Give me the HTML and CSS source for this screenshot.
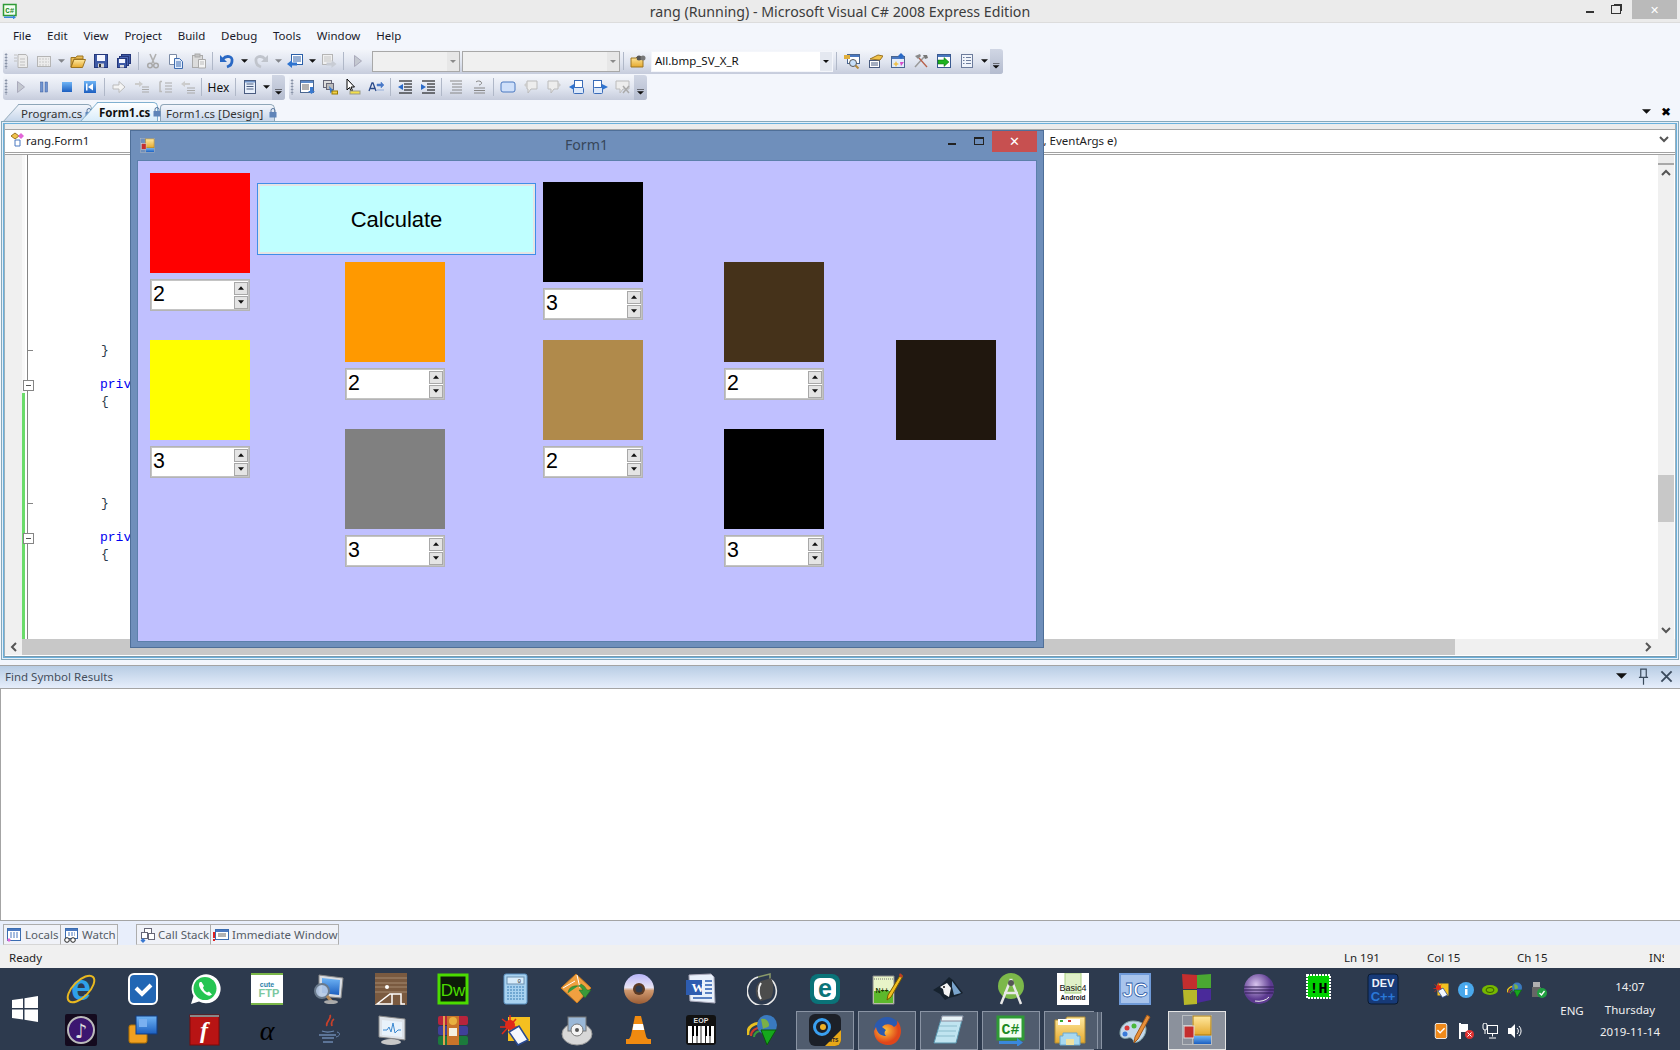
FILE: index.html
```html
<!DOCTYPE html>
<html lang="en">
<head>
<meta charset="utf-8">
<title>rang (Running) - Microsoft Visual C# 2008 Express Edition</title>
<link rel="stylesheet" href="styles.css">
</head>
<body>
<svg class="defs" xmlns="http://www.w3.org/2000/svg">
<defs>
<linearGradient id="gBlue" x1="0" y1="0" x2="0" y2="1"><stop offset="0" stop-color="#6fb4f5"/><stop offset="1" stop-color="#1c5fc0"/></linearGradient>
<linearGradient id="gFold" x1="0" y1="0" x2="0" y2="1"><stop offset="0" stop-color="#ffe9a0"/><stop offset="1" stop-color="#e5a92e"/></linearGradient>
<linearGradient id="gDisc" x1="0" y1="0" x2="0" y2="1"><stop offset="0" stop-color="#b8b4f8"/><stop offset=".45" stop-color="#e8e4f4"/><stop offset=".55" stop-color="#d09a70"/><stop offset="1" stop-color="#9a5c34"/></linearGradient>
<radialGradient id="gFox" cx=".4" cy=".4"><stop offset="0" stop-color="#ffc83a"/><stop offset="1" stop-color="#e0461a"/></radialGradient>
<radialGradient id="gEcl" cx=".4" cy=".35"><stop offset="0" stop-color="#d8c4ee"/><stop offset="1" stop-color="#5c3a90"/></radialGradient>
<symbol id="newp" viewBox="0 0 16 16"><path d="M5 1.500h8l1.500 2v11H5z" fill="#ececec" stroke="#b5b5b5"/><path d="M1 2h3M1 5h3M1 8h3M7 6h5M7 9h5M7 12h5" stroke="#c0c0c0"/></symbol>
<symbol id="addi" viewBox="0 0 16 16"><rect x="1.500" y="3.500" width="13" height="10" fill="#ececec" stroke="#b5b5b5"/><path d="M3 6h10M3 9h10M3 12h10" stroke="#c8c8c8" stroke-dasharray="2 1"/></symbol>
<symbol id="open" viewBox="0 0 16 16"><path d="M1 4.500h5l1-1.500h6v3H4L1 14z" fill="#e9bb52" stroke="#9c7420"/><path d="M4 6.500h11.500L12.500 14.500H1z" fill="url(#gFold)" stroke="#9c7420"/></symbol>
<symbol id="save" viewBox="0 0 16 16"><rect x="1.500" y="1.500" width="13" height="13" fill="#3e5aa6" stroke="#24377a"/><rect x="4" y="2" width="8" height="6" fill="#f4f6ff"/><rect x="5" y="10.500" width="6" height="4" fill="#d8d8d8"/><rect x="6" y="11" width="2" height="3" fill="#333"/></symbol>
<symbol id="savea" viewBox="0 0 16 16"><rect x="5.500" y="1.500" width="9" height="9" fill="#3e5aa6" stroke="#24377a"/><rect x="3.500" y="3.500" width="9" height="9" fill="#4c68b6" stroke="#24377a"/><rect x="1.500" y="5.500" width="9" height="9" fill="#3e5aa6" stroke="#24377a"/><rect x="3" y="6" width="6" height="4" fill="#f4f6ff"/><rect x="4" y="12" width="4" height="2.500" fill="#ddd"/></symbol>
<symbol id="cut" viewBox="0 0 16 16"><path d="M5 1l4 9M11 1L7 10" stroke="#b0b0b0" stroke-width="1.600" fill="none"/><circle cx="5" cy="12.500" r="2.300" fill="none" stroke="#a8a8a8" stroke-width="1.500"/><circle cx="11" cy="12.500" r="2.300" fill="none" stroke="#a8a8a8" stroke-width="1.500"/></symbol>
<symbol id="copy" viewBox="0 0 16 16"><path d="M1.500 1.500h7v10h-7z" fill="#fff" stroke="#7a8aa5"/><path d="M6.500 5.500h5l3 3v7h-8z" fill="#e4eefc" stroke="#3e6cb0"/><path d="M8 9h5M8 11h5M8 13h5" stroke="#3e6cb0"/></symbol>
<symbol id="paste" viewBox="0 0 16 16"><rect x="1.500" y="2.500" width="10" height="12" fill="#dcdcdc" stroke="#aaa"/><rect x="4" y="1" width="5" height="3" fill="#c4c4c4" stroke="#aaa"/><path d="M7.500 6.500h7v8.500h-7z" fill="#f4f4f4" stroke="#aaa"/><path d="M9 9h4M9 11h4" stroke="#bbb"/></symbol>
<symbol id="undo" viewBox="0 0 16 16"><path d="M4 6c3-4 10-3 9 2 0 3-2 5-5 6" fill="none" stroke="#2968c4" stroke-width="2.800"/><path d="M1 2v7h7z" fill="#2968c4"/></symbol>
<symbol id="redo" viewBox="0 0 16 16"><path d="M12 6C9 2 2 3 3 8c0 3 2 5 5 6" fill="none" stroke="#c0c4cc" stroke-width="2.800"/><path d="M15 2v7H8z" fill="#c0c4cc"/></symbol>
<symbol id="navb" viewBox="0 0 16 16"><rect x="4.500" y="1.500" width="11" height="10" fill="#fff" stroke="#2a5fa8"/><path d="M6 4h8M6 6h8M6 8h8" stroke="#2a5fa8"/><path d="M0 11l5-4v2.500h5v3H5V15z" fill="#2f74d0"/></symbol>
<symbol id="navf" viewBox="0 0 16 16"><rect x="1.500" y="1.500" width="10" height="10" fill="#f0f0f0" stroke="#b5b5b5"/><path d="M3 4h7M3 6h7M3 8h7" stroke="#c5c5c5"/><path d="M15.500 11l-5-4v2.500h-5v3h5V15z" fill="#c8ccd4"/></symbol>
<symbol id="play" viewBox="0 0 16 16"><path d="M4.500 2.500v11l7-5.500z" fill="#c4c8d0" stroke="#aab"/></symbol>
<symbol id="pause" viewBox="0 0 16 16"><rect x="4.500" y="3" width="2.500" height="10" fill="#6f93d0" stroke="#3a5ca0" stroke-width=".5"/><rect x="9" y="3" width="2.500" height="10" fill="#6f93d0" stroke="#3a5ca0" stroke-width=".5"/></symbol>
<symbol id="stop" viewBox="0 0 16 16"><rect x="3" y="3" width="10" height="10" fill="url(#gBlue)"/></symbol>
<symbol id="rest" viewBox="0 0 16 16"><rect x="2" y="2" width="12" height="12" fill="url(#gBlue)"/><path d="M11 4.500v7L6 8z" fill="#fff"/><rect x="4" y="4.500" width="1.500" height="7" fill="#fff"/></symbol>
<symbol id="step" viewBox="0 0 16 16"><path d="M2 6h6V2.500L14 8l-6 5.500V10H2z" fill="#f4f4f4" stroke="#bbb"/></symbol>
<symbol id="stpi" viewBox="0 0 16 16"><path d="M1 4h4V2l4 3-4 3V6H1z" fill="#ccc"/><path d="M8 8h7M8 10.500h7M8 13h7" stroke="#aaa"/></symbol>
<symbol id="stpo" viewBox="0 0 16 16"><path d="M3 2.500h2M3 2.500v10h2" stroke="#bbb" fill="none" stroke-width="1.500"/><path d="M8 4h7M8 7h7M8 10h7M8 13h7" stroke="#aaa"/></symbol>
<symbol id="stpu" viewBox="0 0 16 16"><path d="M1 5l4-3v2h5v2H5v2z" fill="#ccc"/><path d="M7 9h8M7 11.500h8M7 14h8" stroke="#aaa"/></symbol>
<symbol id="wind" viewBox="0 0 16 16"><rect x="2.500" y="1.500" width="11" height="13" fill="#e8f0fb" stroke="#4a5c80"/><path d="M4.500 5h7M4.500 7.500h7M4.500 10h7" stroke="#4a5c80"/><rect x="3" y="2" width="10" height="1.500" fill="#6f93c8"/></symbol>
<symbol id="cv1" viewBox="0 0 16 16"><rect x="1.500" y="1.500" width="13" height="12" fill="#fff" stroke="#4a6690"/><rect x="2" y="2" width="12" height="2" fill="#5c8ac8"/><path d="M3 6h7M3 8h7M3 10h7" stroke="#666"/><path d="M11 8h3v4h2l-3.500 3L9 12h2z" fill="#3a7ad0"/></symbol>
<symbol id="cv2" viewBox="0 0 16 16"><rect x="1.500" y="1.500" width="8" height="7" fill="#ddd" stroke="#667"/><rect x="4.500" y="4.500" width="7" height="6" fill="#bbb" stroke="#667"/><path d="M7 7l5 5-2 .5-1.500 2z" fill="#3a7ad0"/><rect x="10" y="12" width="5.500" height="3" fill="#f2d24a" stroke="#997a00"/></symbol>
<symbol id="cur" viewBox="0 0 16 16"><path d="M2 0v11l2.500-2.500 1.500 3.500 1.500-.5L6 8h3.500z" fill="#fff" stroke="#000"/><rect x="5" y="12" width="10" height="3" fill="#f4e04a" stroke="#998"/></symbol>
<symbol id="abc" viewBox="0 0 16 16"><path d="M1 12l3-8h1l3 8M2.500 9.500h4.500" stroke="#2a4a8a" stroke-width="1.300" fill="none"/><path d="M9 5h4V3l3 3-3 3V7H9zM9 11h7" fill="#4a7ac8" stroke="#4a7ac8" stroke-width=".500"/></symbol>
<symbol id="ind1" viewBox="0 0 16 16"><path d="M2 2h13M7 5h8M7 8h8M7 11h8M2 14h13" stroke="#000" stroke-width="1.200"/><path d="M1 8l5-3v6z" fill="#2a6ac8"/></symbol>
<symbol id="ind2" viewBox="0 0 16 16"><path d="M2 2h13M7 5h8M7 8h8M7 11h8M2 14h13" stroke="#000" stroke-width="1.200"/><path d="M6 8L1 5v6z" fill="#2a6ac8"/></symbol>
<symbol id="lin1" viewBox="0 0 16 16"><path d="M2 2h12M4 5h10M4 8h10M4 11h10M2 14h12" stroke="#888"/></symbol>
<symbol id="lin2" viewBox="0 0 16 16"><path d="M3 9h11M3 11.500h11M3 14h11" stroke="#888"/><path d="M5 3a3 2 0 1 1 3 3" fill="none" stroke="#888"/></symbol>
<symbol id="bub" viewBox="0 0 16 16"><rect x="1" y="3" width="14" height="10" rx="2" fill="#cfe0fa" stroke="#4a78c0"/></symbol>
<symbol id="bubl" viewBox="0 0 16 16"><path d="M4 2h10v8H8l-3 4v-4H4z" fill="#ededed" stroke="#bbb"/><path d="M1 6l3-3v6z" fill="#ccc"/></symbol>
<symbol id="bubr" viewBox="0 0 16 16"><path d="M2 2h10v8H8l-3 4v-4H2z" fill="#ededed" stroke="#bbb"/><path d="M15 6l-3-3v6z" fill="#ccc"/></symbol>
<symbol id="fnd1" viewBox="0 0 16 16"><rect x="5.500" y="1.500" width="8" height="8" fill="#fff" stroke="#3a6cb8"/><rect x="4.500" y="8.500" width="10" height="6" rx="1" fill="#dbe8fa" stroke="#3a6cb8"/><path d="M5 5v6L0 8z" fill="#2f74d0"/></symbol>
<symbol id="fnd2" viewBox="0 0 16 16"><rect x="1.500" y="1.500" width="8" height="8" fill="#fff" stroke="#3a6cb8"/><rect x="1.500" y="8.500" width="9" height="6" rx="1" fill="#dbe8fa" stroke="#3a6cb8"/><path d="M10 5v6l6-3z" fill="#2f74d0"/></symbol>
<symbol id="fndx" viewBox="0 0 16 16"><path d="M1 2h13v8H8l-3 4v-4H1z" fill="#ededed" stroke="#bbb"/><path d="M8 7l6 7M14 7l-6 7" stroke="#aaa" stroke-width="1.500"/></symbol>
<symbol id="ffld" viewBox="0 0 16 16"><path d="M1 5h5l1-1h6v10H1z" fill="url(#gFold)" stroke="#9c7420"/><circle cx="9" cy="5" r="2.500" fill="#555"/><circle cx="13" cy="5" r="2.500" fill="#777"/></symbol>
<symbol id="fwin" viewBox="0 0 16 16"><rect x="3.500" y="1.500" width="12" height="9" fill="#fff" stroke="#4a6690"/><rect x="4" y="2" width="11" height="2" fill="#4a78c0"/><rect x="0" y="2" width="6" height="4" fill="#dfae3c"/><circle cx="9" cy="10" r="3.500" fill="#c8e0fa" stroke="#555"/><path d="M11.500 12.500l3 3" stroke="#b58a3a" stroke-width="2"/></symbol>
<symbol id="fhnd" viewBox="0 0 16 16"><rect x="2.500" y="7.500" width="10" height="7" fill="#fff" stroke="#4a5c80"/><path d="M4 10h7M4 12h7" stroke="#4a5c80"/><path d="M3 6l8-4 5 1-3 4z" fill="#f0c24a" stroke="#9c7420"/></symbol>
<symbol id="fprp" viewBox="0 0 16 16"><rect x="1.500" y="3.500" width="13" height="11" fill="#e2ecfa" stroke="#4a6690"/><rect x="2" y="4" width="12" height="2" fill="#4a78c0"/><path d="M6 8l1 2 2 1-2 1-1 2-1-2-2-1 2-1z" fill="#f0c24a"/><path d="M10 9l4 0-3 4z" fill="#d64bc8"/><path d="M11 0l3 3-3 3-3-3z" fill="#2a6ac8"/></symbol>
<symbol id="tool" viewBox="0 0 16 16"><path d="M2 14L11 4" stroke="#9a9a9a" stroke-width="1.500"/><path d="M14 14L6 5" stroke="#b8604a" stroke-width="1.300"/><path d="M2 3l5-2 1 2-3 3z" fill="#8a8a8a"/><path d="M10 2h4l1 3-3 1z" fill="#777"/></symbol>
<symbol id="goin" viewBox="0 0 16 16"><rect x="1.500" y="1.500" width="13" height="13" fill="#fff" stroke="#3a5a90"/><rect x="2" y="2" width="12" height="2" fill="#4a78c0"/><path d="M2 7h6V4.500L13 9l-5 4.500V11H2z" fill="#1fb21f" stroke="#0a6a0a" stroke-width=".500"/></symbol>
<symbol id="list" viewBox="0 0 16 16"><rect x="2.500" y="1.500" width="11" height="13" fill="#f0f4fb" stroke="#6c7c9c"/><path d="M7 4.500h5M7 7.500h5M7 10.500h5" stroke="#6c7c9c"/><path d="M4 4.500h1.500M4 7.500h1.500M4 10.500h1.500" stroke="#6c7c9c"/></symbol>
<symbol id="lock" viewBox="0 0 8 10"><path d="M2 4V2.500a2 2 0 0 1 4 0V4" fill="none" stroke="#58759c"/><rect x="0.500" y="4" width="7" height="5.500" fill="#5f84b8"/></symbol>
<symbol id="down" viewBox="0 0 8 4"><path d="M0 0h8L4 4z" fill="#111"/></symbol>
<symbol id="chvd" viewBox="0 0 10 8"><path d="M1 1l4 4 4-4" fill="none" stroke="#555" stroke-width="2"/></symbol>
<symbol id="chvu" viewBox="0 0 10 8"><path d="M1 6l4-4 4 4" fill="none" stroke="#555" stroke-width="2"/></symbol>
<symbol id="chvl" viewBox="0 0 8 10"><path d="M6 1L2 5l4 4" fill="none" stroke="#555" stroke-width="2"/></symbol>
<symbol id="chvr" viewBox="0 0 8 10"><path d="M2 1l4 4-4 4" fill="none" stroke="#555" stroke-width="2"/></symbol>
<symbol id="sup" viewBox="0 0 7 4"><path d="M0 4l3.500-4L7 4z" fill="#111"/></symbol>
<symbol id="sdn" viewBox="0 0 7 4"><path d="M0 0l3.500 4L7 0z" fill="#111"/></symbol>
<symbol id="cls" viewBox="0 0 16 16"><path d="M7 2l4 3-4 3-4-3z" fill="#f0c24a" stroke="#9c7420" transform="translate(-1 -1)"/><path d="M12 1l3 3-3 3-3-3z" fill="#e266d8"/><path d="M6 8h5v6H6z" fill="#fff" stroke="#4a78c0"/></symbol>
<symbol id="form" viewBox="0 0 32 32"><rect x="1.500" y="1.500" width="29" height="29" fill="none" stroke="#b8bcc0"/><path d="M11.500 1.500v29M1.500 11.500h10M11.500 21.500h19" stroke="#b8bcc0"/><rect x="12" y="2" width="18" height="19" fill="url(#gFold)" stroke="#a87a10"/><rect x="3" y="12" width="10" height="12" fill="#c42e2e" stroke="#ddd"/><rect x="13" y="22" width="17" height="8" fill="url(#gBlue)"/></symbol>
<symbol id="csh" viewBox="0 0 32 32"><rect x="3" y="3" width="25" height="22" fill="#f4fff2" stroke="#2f9a36" stroke-width="3"/><text x="15.500" y="20" class="ic-csh">C#</text><path d="M4 27h18v-3l6 4.500-6 4.500v-3H4z" fill="#3a88dc"/></symbol>
<symbol id="ie" viewBox="0 0 32 32"><text x="16" y="27" class="ic-e">e</text><ellipse cx="16" cy="16" rx="17" ry="8" fill="none" stroke="#e8b820" stroke-width="2" transform="rotate(-45 16 16)"/></symbol>
<symbol id="task" viewBox="0 0 32 32"><rect x="2" y="1" width="28" height="30" rx="5" fill="#2166b4" stroke="#fff" stroke-width="2"/><path d="M9 15l6 6 9-9" fill="none" stroke="#fff" stroke-width="4"/></symbol>
<symbol id="wapp" viewBox="0 0 32 32"><path d="M2 31l2.500-8A14.500 14.500 0 1 1 10 28.500z" fill="#fff"/><circle cx="16" cy="15.500" r="11.500" fill="#26c553"/><path d="M11 9c-2 2-1 6 3 10s7 4.500 9 2.500l-3-3-2 1c-2-1-3.500-3-4-5l1-1.500-2.500-4z" fill="#fff"/></symbol>
<symbol id="ftp" viewBox="0 0 32 32"><rect width="32" height="32" fill="#fff"/><rect width="32" height="2" fill="#7ab648"/><rect y="30" width="32" height="2" fill="#7ab648"/><text x="16" y="14" class="ic-cute">cute</text><text x="18" y="24" class="ic-ftp">FTP</text></symbol>
<symbol id="mon" viewBox="0 0 32 32"><path d="M6 2l24 3-2 20L6 23z" fill="#d8dce2" stroke="#888"/><path d="M9 5l18 2-1 15-17-2z" fill="url(#gBlue)"/><circle cx="9" cy="18" r="7" fill="#b8cce8" fill-opacity=".9" stroke="#6a7a8c" stroke-width="2"/><path d="M14 23l5 6" stroke="#b58a5a" stroke-width="3"/><ellipse cx="18" cy="29" rx="7" ry="2" fill="#aaa"/></symbol>
<symbol id="wood" viewBox="0 0 32 32"><rect width="32" height="32" fill="#7a5a40"/><path d="M0 5h32M0 10h32M0 14h32M0 19h32" stroke="#a58a70"/><circle cx="12" cy="14" r="2" fill="#fff"/><path d="M2 31l13-10h2v10zM17 31V21h9v10h4" fill="none" stroke="#fff" stroke-width="1.500"/></symbol>
<symbol id="dw" viewBox="0 0 32 32"><rect x="2" y="2" width="28" height="28" fill="#0c1c08" stroke="#4bdc00" stroke-width="3"/><text x="16" y="23" class="ic-dw">Dw</text></symbol>
<symbol id="calc" viewBox="0 0 32 32"><rect x="5" y="1" width="23" height="30" rx="2" fill="#a8d2f0" stroke="#5a90c0"/><rect x="8" y="4" width="17" height="7" fill="#d8ecfa" stroke="#6a90b0"/><text x="22" y="10" class="ic-calc">0</text><path d="M8 14h17M8 17h17M8 20h17M8 23h17M8 26h17" stroke="#5f9ac8" stroke-width="1.500" stroke-dasharray="2 1"/></symbol>
<symbol id="diam" viewBox="0 0 32 32"><path d="M15 1l15 14-14 15L0 15z" fill="#f0a040" stroke="#c87a20"/><path d="M2 15l12-7M16 2l3 13" stroke="#fff" stroke-width="1"/><path d="M7 20a8 8 0 0 1 15-3h-4l6 8 6-8h-4a12 12 0 0 0-6-6" fill="#3a9a3a" stroke="#1f6a1f" stroke-width=".500"/></symbol>
<symbol id="disc" viewBox="0 0 32 32"><circle cx="16" cy="16" r="15" fill="url(#gDisc)"/><circle cx="16" cy="16" r="6" fill="#5c3a24"/><circle cx="16" cy="16" r="3.500" fill="#2d3a4e"/></symbol>
<symbol id="word" viewBox="0 0 32 32"><path d="M4 2l22-1 3 3 1 26-25-2z" fill="#e8f0fb" stroke="#aab"/><rect x="1" y="7" width="16" height="15" fill="#2d5cb0"/><text x="13" y="19" class="ic-w">W</text><path d="M20 8h7M20 12h7M20 16h7M20 20h7M8 25h19" stroke="#2d5cb0" stroke-width="1.500"/></symbol>
<symbol id="gshp" viewBox="0 0 32 32"><path d="M23 6a14.500 14.500 0 1 1-12-2" fill="none" stroke="#e8e8e8" stroke-width="1.600"/><path d="M11 4l12-3v9" fill="none" stroke="#8a9a6a" stroke-width="1.500"/><path d="M14 8l10-3c3 6 3 14 0 20l-10 3c-7-4-7-16 0-20z" fill="#4c4c4c"/><path d="M14 10c-3 4-3 12 0 16" stroke="#f0f0f0" stroke-width="2" fill="none"/></symbol>
<symbol id="eset" viewBox="0 0 32 32"><rect x="1" y="1" width="30" height="30" rx="8" fill="#0a7378"/><rect x="5" y="5" width="22" height="22" rx="6" fill="#fff"/><text x="16" y="24" class="ic-eset">e</text></symbol>
<symbol id="npp" viewBox="0 0 32 32"><path d="M2 3h21v28H2z" fill="#e8f4c8" stroke="#888"/><path d="M3 6h19" stroke="#777" stroke-dasharray="1 1"/><rect x="3" y="18" width="19" height="12" fill="#5cb82c"/><text x="11" y="20" class="ic-npp">N++</text><path d="M30 1l2 2-12 21-4 3 1-5z" fill="#f0c020" stroke="#7a5a00"/><path d="M29 0l3 3-2 2-2-3z" fill="#b83a2a"/></symbol>
<symbol id="bird" viewBox="0 0 32 32"><path d="M0 17l8-5 8-8 4 3 10 13-6 3-8 2-4 2-5-6z" fill="#16222e"/><path d="M7 14l7-4 4 5-2 9-5-3-1-5z" fill="#f4f4f4"/><path d="M19 8l9 12-7 2-2-8z" fill="#7aa4cc"/><circle cx="11" cy="14" r="1" fill="#111"/></symbol>
<symbol id="andr" viewBox="0 0 32 32"><circle cx="16" cy="13" r="13" fill="#7cb84a"/><path d="M16 6L6 31M16 6l10 25M9 20h14" stroke="#e8e8e8" stroke-width="2.500" fill="none"/><circle cx="16" cy="10" r="3" fill="#555"/></symbol>
<symbol id="b4a" viewBox="0 0 32 32"><rect width="32" height="32" fill="#fff"/><rect x="8" y="0" width="16" height="20" fill="#dff0c8" stroke="#a8d080"/><text x="16" y="18" class="ic-b4a">Basic4</text><text x="16" y="27" class="ic-b4b">Android</text></symbol>
<symbol id="jc" viewBox="0 0 32 32"><rect width="32" height="32" fill="#6f9ad8"/><rect x="2" y="2" width="28" height="28" fill="#a8c4ec"/><text x="16" y="24" class="ic-jc">JC</text></symbol>
<symbol id="clr" viewBox="0 0 32 32"><path d="M1 1l15 1v14H2z" fill="#c42e2e"/><path d="M16 2l14-1v14H16z" fill="#4aa832"/><path d="M2 17h14v14l-13 1z" fill="#b8b82a"/><path d="M16 16h14v11l-14 3z" fill="#4a2a9a"/></symbol>
<symbol id="ecl" viewBox="0 0 32 32"><circle cx="16" cy="16" r="15" fill="url(#gEcl)"/><path d="M1 14h30M1 17h30M2 20h28" stroke="#2d1a50" stroke-width="1.200"/><path d="M26 24a12 8 0 0 1-14 4" fill="none" stroke="#eee"/></symbol>
<symbol id="hi" viewBox="0 0 32 32"><rect x="2" y="2" width="23" height="23" fill="#00d000" stroke="#fff" stroke-dasharray="2 1" stroke-width="2"/><text x="13.500" y="20" class="ic-hi">!H</text></symbol>
<symbol id="dev" viewBox="0 0 32 32"><rect x="1" y="1" width="30" height="30" rx="3" fill="#173a78" stroke="#0a1a30"/><text x="16" y="14" class="ic-dev">DEV</text><text x="16" y="28" class="ic-cpp">C++</text></symbol>
<symbol id="clef" viewBox="0 0 32 32"><rect width="32" height="32" rx="2" fill="#140a1e"/><circle cx="16" cy="16" r="13" fill="#3c1670" stroke="#bbb" stroke-width="2"/><text x="16" y="24" class="ic-clef">♪</text></symbol>
<symbol id="stak" viewBox="0 0 32 32"><rect x="2" y="11" width="18" height="18" rx="2" fill="#f0a020" stroke="#b07000"/><rect x="9" y="2" width="21" height="18" fill="url(#gBlue)" stroke="#133d80"/><rect x="12" y="5" width="8" height="8" fill="#7ab0f0"/></symbol>
<symbol id="flsh" viewBox="0 0 32 32"><rect x="1" y="1" width="29" height="30" fill="#b81414" stroke="#7a0a0a"/><rect x="1" y="1" width="29" height="2" fill="#888"/><text x="15" y="24" class="ic-f">f</text></symbol>
<symbol id="alph" viewBox="0 0 32 32"><text x="16" y="26" class="ic-a">α</text></symbol>
<symbol id="java" viewBox="0 0 32 32"><path d="M17 1c2 4-5 7-3 11M21 5c-3 2-3 4-2 7" fill="none" stroke="#c8402a" stroke-width="1.800"/><path d="M9 17c5 2 9 1 12 0M6 21h17M9 24h12M10 28h10" stroke="#6c88b0" stroke-width="1.300" fill="none"/><path d="M24 18c4 1 3 4-1 5" fill="none" stroke="#6c88b0"/></symbol>
<symbol id="chrt" viewBox="0 0 32 32"><path d="M4 2l26 3v21L4 23z" fill="#dde2e8" stroke="#888"/><path d="M7 6l20 2v15L7 21z" fill="#e8f2fb"/><path d="M8 16l4 0 2-3 2 5 2-9 2 10 3-3h3" fill="none" stroke="#3a88d0"/><ellipse cx="16" cy="28" rx="10" ry="3" fill="#c8c8c8"/></symbol>
<symbol id="rar" viewBox="0 0 32 32"><rect x="1" y="2" width="30" height="9" rx="2" fill="#b8243c"/><rect x="1" y="12" width="30" height="9" rx="2" fill="#40409a"/><rect x="1" y="22" width="30" height="9" rx="2" fill="#1c7a3c"/><rect x="10" y="2" width="12" height="29" fill="#c8742a"/><rect x="6" y="2" width="2" height="29" fill="#e0a050"/><circle cx="16" cy="7" r="4" fill="#e8b040"/><rect x="12" y="14" width="8" height="8" fill="#f4f0e0"/></symbol>
<symbol id="book" viewBox="0 0 32 32"><rect x="9" y="3" width="22" height="24" fill="#f4c020"/><circle cx="11" cy="11" r="5" fill="#e02a1a"/><path d="M3 5l16 12M11 1v18M1 13l18 0M3 20L17 5" stroke="#e02a1a" stroke-width="1.500"/><path d="M10 18l10-6 9 14-10 5z" fill="#f4f8ff" stroke="#2a4a90" stroke-width="1.500"/></symbol>
<symbol id="dsk" viewBox="0 0 32 32"><ellipse cx="16" cy="20" rx="15" ry="11" fill="#d8d8d8" stroke="#999"/><rect x="7" y="3" width="18" height="14" fill="#9ab8d8" stroke="#777"/><circle cx="16" cy="16" r="6" fill="#f4f4f4" stroke="#777"/><circle cx="16" cy="16" r="2" fill="#555"/></symbol>
<symbol id="vlc" viewBox="0 0 32 32"><path d="M12 2h6l6 24H7z" fill="#f08a10"/><path d="M10.500 10h9.500l1.200 6H9.500z" fill="#fff"/><path d="M3 25h3l2-3h14l3 3h3v5H3z" fill="#f08a10"/></symbol>
<symbol id="eop" viewBox="0 0 32 32"><rect x="1" y="1" width="30" height="30" rx="3" fill="#111"/><text x="16" y="9" class="ic-eop">EOP</text><rect x="3" y="12" width="26" height="17" fill="#fff"/><path d="M7.500 12v17M12 12v17M16 12v17M20.500 12v17M25 12v17" stroke="#333"/><path d="M7 12h2v10H7zM11 12h2v10h-2zM20 12h2v10h-2zM24 12h2v10h-2z" fill="#000"/></symbol>
<symbol id="idm" viewBox="0 0 32 32"><path d="M1 21a11 10 0 0 1 15-11" fill="none" stroke="#e8c020" stroke-width="3"/><path d="M4 22a9 8 0 0 1 11-8" fill="none" stroke="#d03a2a" stroke-width="2"/><path d="M7 23a7 6 0 0 1 8-6" fill="none" stroke="#3a9a3a" stroke-width="2"/><circle cx="20" cy="11" r="10" fill="#3a7ac0"/><path d="M14 5c4-1 7 1 8 5s-4 3-6 5" fill="#7ab048"/><path d="M14 16h15l-9 15z" fill="#15a81c" stroke="#0a5a0a"/></symbol>
<symbol id="mts" viewBox="0 0 32 32"><rect x="0" y="0" width="32" height="32" rx="6" fill="#1c2028"/><path d="M32 16v10a6 6 0 0 1-6 6H16z" fill="#e8a818"/><circle cx="13" cy="13" r="7.500" fill="none" stroke="#3aa0f0" stroke-width="3"/><circle cx="14" cy="13" r="3" fill="#f0b020"/><text x="24" y="28" class="ic-mts">MTS</text></symbol>
<symbol id="fox" viewBox="0 0 32 32"><circle cx="16" cy="16" r="13" fill="#2a5ab0"/><path d="M3 17c0 9 7 14 14 14 9 0 13-8 13-14 0-4-2-9-4-10 1 3-1 5-3 6-3-3-8-4-12 0l4 3c-2 2-2 4 0 6-4 0-9-2-10-9z" fill="url(#gFox)"/></symbol>
<symbol id="note" viewBox="0 0 32 32"><path d="M9 2h21L23 29H1z" fill="#c0e4f0" stroke="#5a98b0"/><path d="M9 2h21l-1 5H8z" fill="#e8f4f8" stroke="#889"/><path d="M6 12h18M5 17h18M4 22h18" stroke="#8abccc"/></symbol>
<symbol id="fldr" viewBox="0 0 32 32"><path d="M1 6h10l2-3h18v26H1z" fill="url(#gFold)" stroke="#b08a30"/><rect x="4" y="5" width="22" height="6" fill="#fff"/><rect x="6" y="6" width="3" height="2" fill="#3a3"/><rect x="14" y="6" width="3" height="2" fill="#c33"/><path d="M9 19h14v3h3v9H6v-9h3z" fill="#a8d8f0" stroke="#6aa8d0"/><rect x="12" y="25" width="8" height="6" fill="#f0e0a0"/></symbol>
<symbol id="palt" viewBox="0 0 32 32"><path d="M14 7C7 7 1 12 1 19c0 5 4 6 8 5 3-1 5 1 6 4 4 2 12-5 12-13 0-5-6-8-13-8z" fill="#c4d8ec" stroke="#8aa"/><circle cx="8" cy="14" r="2.500" fill="#d83a3a"/><circle cx="15" cy="12" r="2.500" fill="#4ab83a"/><circle cx="6" cy="20" r="2.500" fill="#3a7ad8"/><path d="M28 1l3 2-12 22-4 4 1-6z" fill="#e8903a" stroke="#a0581a"/></symbol>
<symbol id="tinf" viewBox="0 0 16 16"><circle cx="8" cy="8" r="8" fill="#49a8ec"/><rect x="7" y="7" width="2.500" height="6" fill="#fff"/><rect x="7" y="3.500" width="2.500" height="2.500" fill="#fff"/></symbol>
<symbol id="tnv" viewBox="0 0 16 16"><ellipse cx="8" cy="8" rx="8" ry="5" fill="#76b900"/><ellipse cx="8" cy="8" rx="4" ry="2.500" fill="none" stroke="#3a5c00"/></symbol>
<symbol id="tusb" viewBox="0 0 16 16"><rect x="2" y="0" width="7" height="5" fill="#b0b0b0"/><rect x="1" y="5" width="9" height="10" fill="#666"/><circle cx="11" cy="11" r="5" fill="#20a040"/><path d="M8.500 11l2 2 3-4" fill="none" stroke="#fff" stroke-width="1.300"/></symbol>
<symbol id="tchk" viewBox="0 0 14 18"><rect x=".500" y=".500" width="13" height="17" rx="2" fill="#f08a1a" stroke="#fff"/><path d="M3 8l3 3 5-5" fill="none" stroke="#fff" stroke-width="1.600"/></symbol>
<symbol id="tflg" viewBox="0 0 16 16"><path d="M2 0v16" stroke="#fff" stroke-width="2"/><path d="M3 1h7v6l2 2H3z" fill="#fff"/><circle cx="11.500" cy="11.500" r="4.500" fill="#e03030"/><path d="M9.500 9.500l4 4M13.500 9.500l-4 4" stroke="#fff"/></symbol>
<symbol id="tnet" viewBox="0 0 16 16"><rect x="5.500" y="2.500" width="10" height="8" fill="none" stroke="#fff"/><path d="M10.500 10.500v3M7 15h7" stroke="#fff"/><rect x="1" y="0" width="4" height="7" rx="2" fill="#2d3a4e" stroke="#fff"/><path d="M3 7v4" stroke="#fff"/></symbol>
<symbol id="tvol" viewBox="0 0 16 16"><path d="M1 5h3l4-4v14l-4-4H1z" fill="#fff"/><path d="M10 5a4 4 0 0 1 0 6M12 3a7 7 0 0 1 0 10" fill="none" stroke="#fff"/></symbol>
<symbol id="locs" viewBox="0 0 16 16"><rect x="1.500" y="1.500" width="13" height="12" fill="#fff" stroke="#3a6cb0"/><rect x="2" y="2" width="12" height="2" fill="#4a78c0"/><path d="M4 6h8M4 8h8M4 10h8" stroke="#4a78c0" stroke-dasharray="2 1"/><path d="M3 11l2 2-2 2-2-2z" fill="#e266d8"/></symbol>
<symbol id="wtch" viewBox="0 0 16 16"><rect x="2.500" y="1.500" width="12" height="10" fill="#fff" stroke="#3a6cb0"/><rect x="3" y="2" width="11" height="2" fill="#4a78c0"/><path d="M5 6h7M5 8h7" stroke="#4a78c0" stroke-dasharray="2 1"/><circle cx="4" cy="13" r="2.300" fill="#fff" stroke="#222"/><circle cx="10" cy="13" r="2.300" fill="#fff" stroke="#222"/></symbol>
<symbol id="call" viewBox="0 0 16 16"><rect x="5.500" y="1.500" width="7" height="7" fill="#fff" stroke="#667"/><rect x="9.500" y="6.500" width="6" height="6" fill="#fff" stroke="#667"/><rect x="2.500" y="5.500" width="6" height="6" fill="#fff" stroke="#667"/><path d="M4 11l2.500 2.500L4 16l-2.500-2.500z" fill="#3a78d0"/></symbol>
<symbol id="immd" viewBox="0 0 16 16"><rect x="2.500" y="2.500" width="13" height="10" fill="#fff" stroke="#3a6cb0"/><rect x="3" y="3" width="12" height="2" fill="#4a78c0"/><path d="M5 7h8M5 9h8" stroke="#666"/><rect x="0" y="5" width="2" height="6" fill="#e02020"/><rect x="0" y="12" width="2" height="2" fill="#e02020"/></symbol>
</defs>
</svg>

<div class="app">
  <header class="titlebar">
    <svg class="title-icon"><use href="#csh"/></svg>
    <span class="title-text">rang (Running) - Microsoft Visual C# 2008 Express Edition</span>
    <div class="wbtns">
      <span class="wmin"></span>
      <span class="wres"></span>
      <span class="wcls">✕</span>
    </div>
  </header>

  <nav class="menubar">
    <span class="mi">File</span><span class="mi">Edit</span><span class="mi">View</span><span class="mi">Project</span><span class="mi">Build</span><span class="mi">Debug</span><span class="mi">Tools</span><span class="mi">Window</span><span class="mi">Help</span>
  </nav>

  <div class="tbrow">
    <div class="toolbar">
      <i class="grip"></i>
      <span class="tb"><svg><use href="#newp"/></svg></span>
      <span class="tb"><svg><use href="#addi"/></svg></span><span class="ar off"><svg><use href="#down"/></svg></span>
      <span class="tb"><svg><use href="#open"/></svg></span>
      <span class="tb"><svg><use href="#save"/></svg></span>
      <span class="tb"><svg><use href="#savea"/></svg></span>
      <i class="sp"></i>
      <span class="tb"><svg><use href="#cut"/></svg></span>
      <span class="tb"><svg><use href="#copy"/></svg></span>
      <span class="tb"><svg><use href="#paste"/></svg></span>
      <i class="sp"></i>
      <span class="tb"><svg><use href="#undo"/></svg></span><span class="ar"><svg><use href="#down"/></svg></span>
      <span class="tb"><svg><use href="#redo"/></svg></span><span class="ar off"><svg><use href="#down"/></svg></span>
      <span class="tb"><svg><use href="#navb"/></svg></span><span class="ar"><svg><use href="#down"/></svg></span>
      <span class="tb"><svg><use href="#navf"/></svg></span>
      <i class="sp"></i>
      <span class="tb"><svg><use href="#play"/></svg></span>
      <div class="combo combo-a"><span class="cb-btn off"><svg><use href="#down"/></svg></span></div>
      <div class="combo combo-b"><span class="cb-btn off"><svg><use href="#down"/></svg></span></div>
      <i class="sp sp-b"></i>
      <span class="tb"><svg><use href="#ffld"/></svg></span>
      <div class="combo combo-c"><span class="cb-text">All.bmp_SV_X_R</span><span class="cb-btn"><svg><use href="#down"/></svg></span></div>
      <i class="sp sp-c"></i>
      <span class="tb"><svg><use href="#fwin"/></svg></span>
      <span class="tb"><svg><use href="#fhnd"/></svg></span>
      <span class="tb"><svg><use href="#fprp"/></svg></span>
      <span class="tb"><svg><use href="#tool"/></svg></span>
      <span class="tb"><svg><use href="#goin"/></svg></span>
      <span class="tb"><svg><use href="#list"/></svg></span><span class="ar"><svg><use href="#down"/></svg></span>
      <span class="chev"></span>
    </div>
  </div>

  <div class="tbrow">
    <div class="toolbar">
      <i class="grip"></i>
      <span class="tb"><svg><use href="#play"/></svg></span>
      <span class="tb"><svg><use href="#pause"/></svg></span>
      <span class="tb"><svg><use href="#stop"/></svg></span>
      <span class="tb"><svg><use href="#rest"/></svg></span>
      <i class="sp"></i>
      <span class="tb"><svg><use href="#step"/></svg></span>
      <span class="tb"><svg><use href="#stpi"/></svg></span>
      <span class="tb"><svg><use href="#stpo"/></svg></span>
      <span class="tb"><svg><use href="#stpu"/></svg></span>
      <i class="sp"></i>
      <span class="hex">Hex</span>
      <i class="sp"></i>
      <span class="tb"><svg><use href="#wind"/></svg></span><span class="ar"><svg><use href="#down"/></svg></span>
      <span class="chev"></span>
    </div>
    <div class="toolbar">
      <i class="grip"></i>
      <span class="tb"><svg><use href="#cv1"/></svg></span>
      <span class="tb"><svg><use href="#cv2"/></svg></span>
      <span class="tb"><svg><use href="#cur"/></svg></span>
      <span class="tb"><svg><use href="#abc"/></svg></span>
      <i class="sp"></i>
      <span class="tb"><svg><use href="#ind1"/></svg></span>
      <span class="tb"><svg><use href="#ind2"/></svg></span>
      <i class="sp"></i>
      <span class="tb"><svg><use href="#lin1"/></svg></span>
      <span class="tb"><svg><use href="#lin2"/></svg></span>
      <i class="sp"></i>
      <span class="tb"><svg><use href="#bub"/></svg></span>
      <span class="tb"><svg><use href="#bubl"/></svg></span>
      <span class="tb"><svg><use href="#bubr"/></svg></span>
      <span class="tb"><svg><use href="#fnd1"/></svg></span>
      <span class="tb"><svg><use href="#fnd2"/></svg></span>
      <span class="tb"><svg><use href="#fndx"/></svg></span>
      <span class="chev"></span>
    </div>
  </div>

  <div class="tabstrip">
    <div class="doc-tab tab-program"><span>Program.cs</span><svg class="lk"><use href="#lock"/></svg></div>
    <div class="doc-tab tab-form active"><span>Form1.cs</span><svg class="lk"><use href="#lock"/></svg></div>
    <div class="doc-tab tab-design"><span>Form1.cs [Design]</span><svg class="lk"><use href="#lock"/></svg></div>
    <div class="tab-tools">
      <svg class="tt-down"><use href="#down"/></svg>
      <span class="tt-x">✖</span>
    </div>
  </div>

  <section class="docframe">
    <div class="docframe2">
      <div class="docframe3">
        <div class="navstrip"></div>
        <div class="navbar">
          <div class="nav-left"><svg class="nav-ic"><use href="#cls"/></svg><span>rang.Form1</span></div>
          <div class="nav-right"><span>, EventArgs e)</span><svg class="nav-chv"><use href="#chvd"/></svg></div>
        </div>
        <div class="editor">
          <div class="gutter"></div>
          <div class="changes"><div class="changed"></div></div>
          <div class="outline">
            <div class="o"></div><div class="o"></div><div class="o"></div><div class="o"></div><div class="o"></div><div class="o"></div><div class="o"></div><div class="o"></div><div class="o"></div><div class="o"></div><div class="o"></div>
            <div class="o tick"></div><div class="o"></div>
            <div class="o box"></div>
            <div class="o"></div><div class="o"></div><div class="o"></div><div class="o"></div><div class="o"></div><div class="o"></div>
            <div class="o tick"></div><div class="o"></div>
            <div class="o box"></div>
          </div>
          <div class="code">
            <div class="ln"></div><div class="ln"></div><div class="ln"></div><div class="ln"></div><div class="ln"></div><div class="ln"></div><div class="ln"></div><div class="ln"></div><div class="ln"></div><div class="ln"></div><div class="ln"></div>
            <div class="ln">}</div><div class="ln"></div>
            <div class="ln kw">private</div><div class="ln">{</div>
            <div class="ln"></div><div class="ln"></div><div class="ln"></div><div class="ln"></div><div class="ln"></div>
            <div class="ln">}</div><div class="ln"></div>
            <div class="ln kw">private</div><div class="ln">{</div>
          </div>
          <div class="vscroll">
            <span class="split"></span>
            <svg class="vs-up"><use href="#chvu"/></svg>
            <span class="vs-thumb"></span>
            <svg class="vs-dn"><use href="#chvd"/></svg>
          </div>
        </div>
        <div class="hscroll">
          <svg class="hs-l"><use href="#chvl"/></svg>
          <span class="hs-thumb"></span>
          <svg class="hs-r"><use href="#chvr"/></svg>
        </div>
      </div>
    </div>
  </section>

  <section class="toolpanel">
    <div class="tp-head">
      <span class="tp-title">Find Symbol Results</span>
      <svg class="tp-down"><use href="#down"/></svg>
      <svg class="tp-pin" viewBox="0 0 12 18"><path d="M3 1h6v9H3zM1 10h10M6 10v8" fill="none" stroke="#3a4a5c" stroke-width="1.300"/></svg>
      <svg class="tp-x" viewBox="0 0 14 14"><path d="M1.500 1.500l11 11M12.500 1.500l-11 11" stroke="#3a4a5c" stroke-width="2"/></svg>
    </div>
    <div class="tp-body"></div>
  </section>

  <div class="bottomtabs">
    <div class="bt bt-locals"><svg><use href="#locs"/></svg><span>Locals</span></div>
    <div class="bt bt-watch"><svg><use href="#wtch"/></svg><span>Watch</span></div>
    <div class="bt bt-call"><svg><use href="#call"/></svg><span>Call Stack</span></div>
    <div class="bt bt-imm"><svg><use href="#immd"/></svg><span>Immediate Window</span></div>
  </div>

  <footer class="statusbar">
    <span class="st-ready">Ready</span>
    <span class="st-ln">Ln 191</span>
    <span class="st-col">Col 15</span>
    <span class="st-ch">Ch 15</span>
    <span class="st-ins">INS</span>
  </footer>

  <div class="taskbar">
    <div class="start">
      <svg class="winlogo" viewBox="0 0 26 26"><path d="M0 4l11-1.500V12H0zM12.500 2.300L26 0v12H12.500zM0 13.500h11v10L0 22zM12.500 13.500H26V26l-13.500-2.200z" fill="#fff"/></svg>
    </div>
    <div class="apps">
      <span class="ap"><svg><use href="#ie"/></svg></span>
      <span class="ap"><svg><use href="#task"/></svg></span>
      <span class="ap"><svg><use href="#wapp"/></svg></span>
      <span class="ap"><svg><use href="#ftp"/></svg></span>
      <span class="ap"><svg><use href="#mon"/></svg></span>
      <span class="ap"><svg><use href="#wood"/></svg></span>
      <span class="ap"><svg><use href="#dw"/></svg></span>
      <span class="ap"><svg><use href="#calc"/></svg></span>
      <span class="ap"><svg><use href="#diam"/></svg></span>
      <span class="ap"><svg><use href="#disc"/></svg></span>
      <span class="ap"><svg><use href="#word"/></svg></span>
      <span class="ap"><svg><use href="#gshp"/></svg></span>
      <span class="ap"><svg><use href="#eset"/></svg></span>
      <span class="ap"><svg><use href="#npp"/></svg></span>
      <span class="ap"><svg><use href="#bird"/></svg></span>
      <span class="ap"><svg><use href="#andr"/></svg></span>
      <span class="ap"><svg><use href="#b4a"/></svg></span>
      <span class="ap"><svg><use href="#jc"/></svg></span>
      <span class="ap"><svg><use href="#clr"/></svg></span>
      <span class="ap"><svg><use href="#ecl"/></svg></span>
      <span class="ap"><svg><use href="#hi"/></svg></span>
      <span class="ap"><svg><use href="#dev"/></svg></span>

      <span class="ap"><svg><use href="#clef"/></svg></span>
      <span class="ap"><svg><use href="#stak"/></svg></span>
      <span class="ap"><svg><use href="#flsh"/></svg></span>
      <span class="ap"><svg><use href="#alph"/></svg></span>
      <span class="ap"><svg><use href="#java"/></svg></span>
      <span class="ap"><svg><use href="#chrt"/></svg></span>
      <span class="ap"><svg><use href="#rar"/></svg></span>
      <span class="ap"><svg><use href="#book"/></svg></span>
      <span class="ap"><svg><use href="#dsk"/></svg></span>
      <span class="ap"><svg><use href="#vlc"/></svg></span>
      <span class="ap"><svg><use href="#eop"/></svg></span>
      <span class="ap"><svg><use href="#idm"/></svg></span>
      <span class="ap"><span class="run"><svg><use href="#mts"/></svg></span></span>
      <span class="ap"><span class="run"><svg><use href="#fox"/></svg></span></span>
      <span class="ap"><span class="run"><svg><use href="#note"/></svg></span></span>
      <span class="ap"><span class="run"><svg><use href="#csh"/></svg></span></span>
      <span class="ap"><span class="run run-multi"><svg><use href="#fldr"/></svg></span></span>
      <span class="ap"><svg><use href="#palt"/></svg></span>
      <span class="ap"><span class="run run-active"><svg><use href="#form"/></svg></span></span>
    </div>
    <div class="tray">
      <span class="ti"><svg viewBox="0 0 32 32"><use href="#book"/></svg></span>
      <span class="ti"><svg><use href="#tinf"/></svg></span>
      <span class="ti"><svg><use href="#tnv"/></svg></span>
      <span class="ti"><svg viewBox="0 0 32 32"><use href="#idm"/></svg></span>
      <span class="ti"><svg><use href="#tusb"/></svg></span>
      <span class="ti"><svg><use href="#tchk"/></svg></span>
      <span class="ti"><svg><use href="#tflg"/></svg></span>
      <span class="ti"><svg><use href="#tnet"/></svg></span>
      <span class="ti"><svg><use href="#tvol"/></svg></span>
    </div>
    <div class="lang">ENG</div>
    <div class="clock"><span>14:07</span><span>Thursday</span><span>2019-11-14</span></div>
  </div>
</div>

<div class="form-window">
  <div class="fw-title">
    <svg class="fw-icon"><use href="#form"/></svg>
    <span class="fw-text">Form1</span>
    <span class="fw-min"></span>
    <span class="fw-max"></span>
    <span class="fw-close">✕</span>
  </div>
  <div class="fw-client">
    <div class="cell c-a"><div class="sw s-red"></div><div class="spin"><span>2</span><div class="spbs"><i><svg><use href="#sup"/></svg></i><i><svg><use href="#sdn"/></svg></i></div></div></div>
    <div class="cell c-b"><div class="sw s-yellow"></div><div class="spin"><span>3</span><div class="spbs"><i><svg><use href="#sup"/></svg></i><i><svg><use href="#sdn"/></svg></i></div></div></div>
    <div class="cell c-c"><div class="sw s-orange"></div><div class="spin"><span>2</span><div class="spbs"><i><svg><use href="#sup"/></svg></i><i><svg><use href="#sdn"/></svg></i></div></div></div>
    <div class="cell c-d"><div class="sw s-gray"></div><div class="spin"><span>3</span><div class="spbs"><i><svg><use href="#sup"/></svg></i><i><svg><use href="#sdn"/></svg></i></div></div></div>
    <div class="cell c-e"><div class="sw s-black"></div><div class="spin"><span>3</span><div class="spbs"><i><svg><use href="#sup"/></svg></i><i><svg><use href="#sdn"/></svg></i></div></div></div>
    <div class="cell c-f"><div class="sw s-tan"></div><div class="spin"><span>2</span><div class="spbs"><i><svg><use href="#sup"/></svg></i><i><svg><use href="#sdn"/></svg></i></div></div></div>
    <div class="cell c-g"><div class="sw s-brown"></div><div class="spin"><span>2</span><div class="spbs"><i><svg><use href="#sup"/></svg></i><i><svg><use href="#sdn"/></svg></i></div></div></div>
    <div class="cell c-h"><div class="sw s-black"></div><div class="spin"><span>3</span><div class="spbs"><i><svg><use href="#sup"/></svg></i><i><svg><use href="#sdn"/></svg></i></div></div></div>
    <div class="cell c-i"><div class="sw s-dark"></div></div>
    <button class="calc-btn">Calculate</button>
  </div>
</div>
</body>
</html>
```

FILE: styles.css
```css
* { box-sizing: border-box; }
html, body { margin: 0; padding: 0; }
body { width: 1680px; height: 1050px; overflow: hidden; position: relative; font: 11.5px "Noto Sans", sans-serif; color: #1e1e1e; background: #f3f6fc; }
i { font-style: normal; }
.defs { display: block; width: 0; height: 0; overflow: hidden; }
.app { width: 1680px; height: 1050px; display: flex; flex-direction: column; }

.titlebar { height: 23px; flex: none; display: flex; background: #ebebeb; border-bottom: 1px solid #dcdcdc; }
.title-icon { width: 16px; height: 16px; margin: 3px 0 0 2px; flex: none; }
.title-text { flex: 1; margin: 0 -94px 0 -18px; text-align: center; font-size: 14.2px; line-height: 23px; color: #3c3c3c; white-space: nowrap; }
.wbtns { display: flex; flex: none; align-items: flex-start; position: relative; }
.wmin { width: 8px; height: 2px; background: #333; margin: 11px 0 0 0; }
.wres { width: 10px; height: 9px; border: 1.500px solid #333; margin: 5px 0 0 17px; box-shadow: 2px -2px 0 -1px #333; }
.wcls { width: 45px; height: 19px; margin: 0 3px 0 11px; background: #bababa; color: #fff; text-align: center; line-height: 19px; font-size: 11px; }

.menubar { height: 26px; flex: none; display: flex; padding: 0 0 2px 5px; align-items: center; }
.mi { padding: 0 7.900px; color: #1a1a2a; }

.tbrow { display: flex; gap: 4px; padding-left: 3px; height: 26px; flex: none; align-items: flex-start; }
.tbrow + .tbrow { height: 27px; }
.toolbar { display: flex; align-items: center; height: 24.500px; border-radius: 3px; background: linear-gradient(#f4f6fb, #dfe4ef 55%, #c6ccdc); }
.grip { width: 6.500px; height: 16px; flex: none; background: radial-gradient(circle at 3px 1.500px, #8a94a8 1px, transparent 1.200px) 0 0 / 6.500px 3px; }
.tb { width: 23px; height: 20px; flex: none; display: flex; align-items: center; justify-content: center; }
.tb svg { width: 16px; height: 16px; display: block; }
.ar { width: 11px; flex: none; display: flex; justify-content: center; }
.ar svg { width: 7px; height: 4px; display: block; }
.ar.off, .cb-btn.off { opacity: .45; }
.sp { width: 5.500px; height: 18px; flex: none; background: linear-gradient(#b0b8c8, #b0b8c8) center / 1px 100% no-repeat; }
.sp-b { width: 6.500px; }
.sp-c { width: 7.500px; }
.hex { width: 28px; flex: none; text-align: center; font-size: 12px; color: #111; }
.chev { width: 13px; height: 100%; flex: none; border-radius: 0 3px 3px 0; background: linear-gradient(#d0d6e4, #b4bccf); display: flex; align-items: flex-end; justify-content: center; }
.chev::after { content: ""; width: 7px; height: 6px; margin-bottom: 5px; background: #111; clip-path: polygon(0 0, 100% 0, 100% 17%, 0 17%, 0 45%, 100% 45%, 50% 100%, 0 45%); }
.combo { height: 21px; flex: none; display: flex; justify-content: flex-end; align-items: stretch; border: 1px solid #a8a8a8; background: #f0f0f0; }
.combo-a { width: 88px; margin-left: 3px; }
.combo-b { width: 158px; margin-left: 2px; }
.combo-c { width: 182px; margin-left: 1.500px; border-color: #f4f6fb; background: #fff; justify-content: space-between; }
.cb-text { padding-left: 3px; line-height: 17px; color: #111; }
.cb-btn { width: 12px; display: flex; align-items: center; justify-content: center; background: #e4e8f0; }
.combo-a .cb-btn, .combo-b .cb-btn { background: #ddd; }
.cb-btn svg { width: 6px; height: 3px; display: block; }

.tabstrip { height: 19px; flex: none; display: flex; align-items: flex-end; padding-left: 20px; }
.doc-tab { height: 17px; flex: none; display: flex; align-items: center; position: relative; white-space: nowrap; border: 1px solid #8ea6b8; border-bottom: none; border-radius: 0 5px 0 0; background: linear-gradient(#f3f6fc, #c6d6ea); color: #333; }
.doc-tab::before { content: ""; position: absolute; left: -10px; top: -1px; bottom: 0; width: 18px; z-index: -1; background: linear-gradient(#f3f6fc, #c6d6ea); border-left: 1px solid #8ea6b8; border-top: 1px solid #8ea6b8; transform: skewX(-42deg); }
.tab-program { width: 72px; z-index: 1; }
.tab-form { width: 61px; height: 19px; margin-left: 5px; z-index: 3; font-weight: 700; color: #111; padding-left: 1px; border-color: #7fb0d0; background: linear-gradient(#fff, #d8ecfa); }
.tab-form::before { background: linear-gradient(#fff, #d8ecfa); border-color: #7fb0d0; z-index: 0; left: -9px; }
.tab-design { width: 115px; margin-left: 2px; padding-left: 5px; z-index: 2; border-radius: 4px 5px 0 0; }
.tab-design::before { display: none; }
.doc-tab span { position: relative; z-index: 1; }
.lk { width: 8px; height: 10px; margin-left: 3px; flex: none; position: relative; z-index: 1; }
.tab-design .lk { margin-left: 6px; }
.tab-tools { margin-left: auto; align-self: center; display: flex; align-items: center; gap: 9px; padding-right: 8px; height: 19px; }
.tt-down { width: 9px; height: 5px; }
.tt-x { font-size: 12px; line-height: 12px; color: #000; width: 12px; text-align: center; }

.docframe { height: 539px; flex: none; margin: 0 1px; border: 1px solid #86a8ba; background: #e4f0fa; padding: 1px; }
.docframe2 { height: 100%; border: 1px solid #6ab0dc; }
.docframe3 { height: 100%; border: 1px solid #9ab0bc; border-top: none; border-bottom: 1px solid #7a9aae; display: flex; flex-direction: column; background: #fff; }
.navstrip { height: 6px; flex: none; background: #ececec; border-bottom: 1px solid #a6a6a6; }
.navbar { height: 25px; flex: none; display: flex; background: #fff; border-bottom: 3px double #a2a2a2; }
.nav-left { width: 835px; flex: none; display: flex; align-items: center; padding: 0 0 2px 4px; }
.nav-ic { width: 16px; height: 16px; flex: none; margin-right: 1px; }
.nav-right { flex: 1; display: flex; align-items: center; padding: 0 6px 2px 203.500px; justify-content: space-between; }
.nav-chv { width: 10px; height: 8px; }
.editor { height: 484px; flex: none; display: flex; }
.gutter { width: 17px; flex: none; background: #f0f0f0; }
.changes { width: 3px; flex: none; background: #f8f8f8; }
.changed { height: 246px; margin-top: 238px; background: #6bdc6b; }
.outline { width: 8px; flex: none; background: linear-gradient(#858585, #858585) 2px 0 / 1px 100% no-repeat #fff; }
.o { height: 17px; }
.tick { background: linear-gradient(#858585, #858585) 2px 8px / 6px 1px no-repeat; }
.box { padding-top: 1px; }
.box::after { content: ""; display: block; width: 9px; height: 9px; margin: 3px 0 0 -2.500px; border: 1px solid #858585; background: linear-gradient(#555, #555) center / 5px 1px no-repeat #fff; }
.code { flex: 1; padding-left: 67px; font: 13px/17px "Liberation Mono", monospace; color: #2a3a4a; overflow: hidden; }
.ln { height: 17px; padding-left: 1px; }
.kw { color: #0000f0; padding-left: 0; }
.vscroll { width: 16px; flex: none; margin-right: 1px; background: #f0f0f0; display: flex; flex-direction: column; align-items: center; }
.split { width: 16px; height: 10px; flex: none; background: #ebebeb; border: 1px solid #a8a8a8; border-width: 0 0 2px 0; }
.vs-up { width: 10px; height: 8px; margin-top: 4px; flex: none; }
.vs-thumb { width: 16px; height: 47px; margin-top: 298px; flex: none; background: #c8c8c8; }
.vs-dn { width: 10px; height: 8px; margin-top: auto; margin-bottom: 4px; flex: none; }
.hscroll { height: 16px; flex: none; display: flex; align-items: center; background: #f0f0f0; padding-left: 5px; }
.hs-l { width: 8px; height: 10px; flex: none; margin-right: 4px; }
.hs-thumb { width: 1433px; height: 100%; flex: none; background: #c8c8c8; }
.hs-r { width: 8px; height: 10px; flex: none; margin-left: 189px; }

.toolpanel { height: 256px; margin-top: 5px; flex: none; display: flex; flex-direction: column; }
.tp-head { height: 24px; flex: none; display: flex; align-items: center; background: linear-gradient(#b8cde4, #e6eefb); border: solid #a4a4a4; border-width: 1px 0; padding: 0 0 2px 5px; color: #444e5c; }
.tp-title { flex: 1; }
.tp-down { width: 11px; height: 6px; flex: none; }
.tp-pin { width: 11px; height: 17px; margin-left: 11px; flex: none; }
.tp-x { width: 13px; height: 13px; margin: 0 7px 0 11px; flex: none; }
.tp-body { flex: 1; background: #fff; border: solid #a4a4a4; border-width: 0 0 1px 1px; }

.bottomtabs { height: 24px; flex: none; display: flex; align-items: flex-end; padding-left: 3px; background: #e8eefb; }
.bt { height: 21px; flex: none; display: flex; align-items: center; padding-left: 2px; gap: 3px; white-space: nowrap; background: #f0f2f8; border: 1px solid #adadad; border-bottom-color: #d6d6d6; color: #555c66; }
.bt svg { width: 16px; height: 16px; flex: none; }
.bt-locals { width: 58px; }
.bt-watch { width: 58px; margin-left: -1px; }
.bt-call { width: 75px; margin-left: 18px; }
.bt-imm { width: 129px; margin-left: -1px; }

.statusbar { height: 23px; flex: none; display: flex; align-items: center; padding: 2px 16px 0 9px; background: #f0f0f0; color: #1e1e1e; }
.st-ready { flex: 1; }
.st-ln { width: 83px; flex: none; }
.st-col { width: 90px; flex: none; }
.st-ch { width: 132px; flex: none; }
.st-ins { width: 15px; flex: none; overflow: hidden; white-space: nowrap; }

.taskbar { height: 82px; flex: none; display: flex; background: #2d3a4e; color: #f0f0f0; }
.start { width: 50px; flex: none; display: flex; align-items: center; padding-left: 12px; }
.winlogo { width: 26px; height: 26px; display: block; }
.apps { width: 1364px; flex: none; display: grid; grid-template-columns: repeat(22, 62px); grid-template-rows: 42px 40px; }
.ap { display: flex; align-items: center; justify-content: center; }
.ap svg { width: 32px; height: 32px; display: block; }
.run { width: 58px; height: 39px; display: flex; align-items: center; justify-content: center; background: #505c6e; border: 1px solid #8a94a4; }
.run-multi { border-right: none; box-shadow: 4px 0 0 -1px #505c6e, 5px 0 0 -1px #8a94a4, 8px 0 0 -1px #505c6e, 9px 0 0 -1px #8a94a4; width: 50px; margin-right: 8px; }
.run-active { background: #8b919c; border-color: #e4e4e4; }
.tray { width: 137px; flex: none; padding: 0 0 0 15px; display: grid; grid-template-columns: repeat(5, 24.500px); grid-template-rows: 44px 38px; }
.ti { display: flex; align-items: center; justify-content: center; }
.ti svg { width: 16px; height: 16px; display: block; }
.lang { width: 42px; flex: none; display: flex; align-items: center; justify-content: center; padding-top: 2px; }
.clock { width: 74px; flex: none; padding-top: 8px; display: flex; flex-direction: column; align-items: center; line-height: 22.500px; }

.form-window { position: absolute; left: 130px; top: 130px; width: 914px; height: 518px; background: #6f8fbb; border: 1px solid #4f6f98; padding: 0 6px 5px; display: flex; flex-direction: column; }
.fw-title { height: 29px; flex: none; display: flex; align-items: flex-start; }
.fw-icon { width: 15px; height: 15px; flex: none; margin: 7px 0 0 3px; }
.fw-text { flex: 1; margin-left: -18px; margin-right: -88px; text-align: center; font-size: 14.200px; line-height: 28px; color: #37475c; }
.fw-min { width: 8px; height: 2px; flex: none; margin: 12px 0 0 0; background: #222; position: relative; }
.fw-max { width: 10px; height: 8px; flex: none; margin: 6px 0 0 18px; border: 1px solid #222; border-top-width: 2px; position: relative; }
.fw-close { width: 45px; height: 21px; flex: none; margin: 0 0 0 8px; background: #c75050; color: #fff; text-align: center; line-height: 21px; font-size: 13px; position: relative; }
.fw-client { flex: 1; position: relative; background: #c0c0ff; border: 1px solid #5c80ab; }
.cell { position: absolute; width: 100px; display: flex; flex-direction: column; gap: 6px; }
.c-a { left: 12px; top: 12px; }
.c-b { left: 12px; top: 179px; }
.c-c { left: 207px; top: 101px; }
.c-d { left: 207px; top: 268px; }
.c-e { left: 405px; top: 21px; }
.c-f { left: 405px; top: 179px; }
.c-g { left: 586px; top: 101px; }
.c-h { left: 586px; top: 268px; }
.c-i { left: 758px; top: 179px; }
.sw { height: 100px; flex: none; }
.s-red { background: #ff0000; }
.s-yellow { background: #ffff00; }
.s-orange { background: #ff9900; }
.s-gray { background: #808080; }
.s-black { background: #000; }
.s-tan { background: #b08a4b; }
.s-brown { background: #45321a; }
.s-dark { background: #20170e; }
.spin { height: 32px; flex: none; display: flex; align-items: center; justify-content: space-between; background: #fff; border: 1px solid #b4b4b4; font: 21.330px/28px "Liberation Sans", sans-serif; color: #000; padding: 0 1px; box-shadow: inset 0 0 0 1px #c4c4c4; }
.spin span { padding-left: 1px; margin-top: -2px; }
.spbs { display: flex; flex-direction: column; gap: 1px; width: 14px; }
.spbs i { height: 13px; display: flex; align-items: center; justify-content: center; background: #e4e4e4; border: 1px solid #a8a8a8; }
.spbs svg { width: 6px; height: 4px; display: block; }
.calc-btn { position: absolute; left: 119px; top: 22px; width: 279px; height: 72px; padding: 2px 0 0; border: 1px solid #3f8ee8; box-shadow: inset 0 0 0 2px #e4e4e4; background: #bfffff; font: 22px "Liberation Sans", sans-serif; color: #000; }

.ic-csh { font: 700 15px "Liberation Mono", monospace; fill: #1c8a24; text-anchor: middle; }
.ic-e { font: 700 36px "Liberation Sans", sans-serif; fill: #2ea0e8; text-anchor: middle; }
.ic-cute { font: 700 7px "Liberation Sans", sans-serif; fill: #2d7fa8; text-anchor: middle; }
.ic-ftp { font: 700 11px "Liberation Sans", sans-serif; fill: #7cc8a0; text-anchor: middle; }
.ic-dw { font: 400 17px "Liberation Sans", sans-serif; fill: #4bdc00; text-anchor: middle; }
.ic-calc { font: 6px "Liberation Mono", monospace; fill: #333; text-anchor: end; }
.ic-w { font: 700 13px "Liberation Serif", serif; fill: #fff; text-anchor: middle; }
.ic-eset { font: 700 25px "Liberation Sans", sans-serif; fill: #0a7378; text-anchor: middle; }
.ic-npp { font: 700 7px "Liberation Sans", sans-serif; fill: #1a3a00; text-anchor: middle; }
.ic-b4a { font: 9px "Liberation Sans", sans-serif; fill: #111; text-anchor: middle; }
.ic-b4b { font: 700 6.500px "Liberation Sans", sans-serif; fill: #111; text-anchor: middle; }
.ic-jc { font: 700 20px "Liberation Sans", sans-serif; fill: #fff; stroke: #2a5aa8; stroke-width: .8px; text-anchor: middle; }
.ic-hi { font: 700 15px "Liberation Mono", monospace; fill: #000; text-anchor: middle; }
.ic-dev { font: 700 11px "Liberation Sans", sans-serif; fill: #eef2fa; text-anchor: middle; }
.ic-cpp { font: 700 13px "Liberation Sans", sans-serif; fill: #2a78d8; text-anchor: middle; }
.ic-clef { font: 20px "DejaVu Sans", sans-serif; fill: #ddd; text-anchor: middle; }
.ic-f { font: italic 700 24px "Liberation Serif", serif; fill: #fff; text-anchor: middle; }
.ic-a { font: italic 28px "Liberation Serif", serif; fill: #000; text-anchor: middle; }
.ic-eop { font: 700 7px "Liberation Sans", sans-serif; fill: #ddd; text-anchor: middle; }
.ic-mts { font: 700 5px "Liberation Sans", sans-serif; fill: #1c2028; text-anchor: middle; }
```
